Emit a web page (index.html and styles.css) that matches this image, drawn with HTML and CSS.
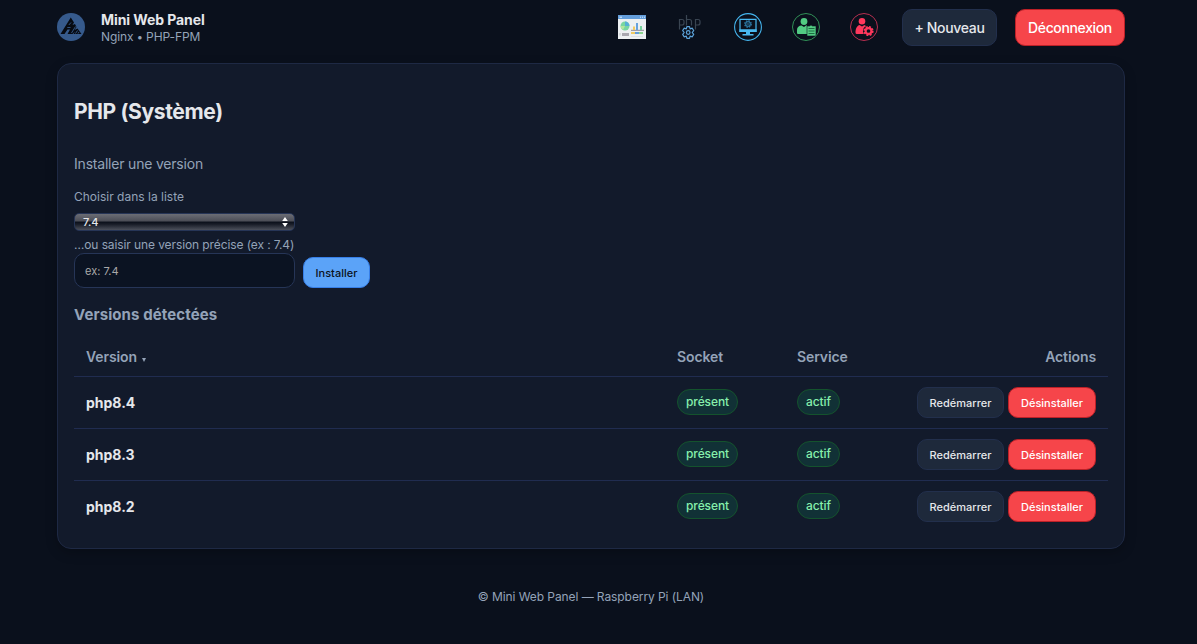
FILE: index.html
```html
<!DOCTYPE html>
<html lang="fr">
<head>
<meta charset="utf-8">
<title>Mini Web Panel</title>
<link rel="stylesheet" href="styles.css">
</head>
<body>
<div class="container">
  <header class="topbar">
    <div class="brand">
      <svg class="logo" viewBox="0 0 28 28"><circle cx="14" cy="14" r="14" fill="#365a8c"/><path d="M3.500 21 13.800 4.500 17 9.500 15.500 12 18 11 19.500 14 17.500 17 20.500 15.500 24.500 21H16.500L18 18.500 15.500 21H10.500L13 16.500H10.500L7.500 21Z" fill="#060a12"/><path d="M10.300 14.500H13.500M11.800 12 14 9.500M14.500 20 18.500 13.500M18.500 20.500 20.500 17.500M21 20.500 22 19" stroke="#365a8c" stroke-width=".9"/></svg>
      <div class="brand-text">
        <div class="brand-name">Mini Web Panel</div>
        <div class="brand-sub">Nginx <span class="dot">•</span> PHP-FPM</div>
      </div>
    </div>
    <nav class="nav">
      <a class="icon"><svg viewBox="0 0 28 28"><path d="M0 2h28v24H0z" fill="#edf0f2"/><path d="M0 2h28v4H0z" fill="#649edb"/><path d="M1.500 4.200h2.500M22 4.200h1m1 0h1m1 0h1" stroke="#d9ecff"/><circle cx="7" cy="13" r="4.500" fill="#79d6a0"/><path d="M7 13V8.500A4.500 4.500 0 0 1 11.500 13Z" fill="#56afd6"/><path d="M7 13H2.500A4.500 4.500 0 0 0 5 17Z" fill="#b4e59c"/><path d="M13 17.300h13" stroke="#8b8794"/><path d="M15 13.500h2V17h-2z" fill="#f0ca62"/><path d="M18 10h2v7h-2z" fill="#66a2dc"/><path d="M22 13h2v4h-2z" fill="#78d39e"/><path d="M4 20h7v3H4z" fill="#aaa8b0"/><path d="M1.500 20h1v2.500h-1z" fill="#c4c5cb"/><path d="M13 19h4v2h-4z" fill="#f0ca62"/><path d="M17 19h4v2h-4z" fill="#649edb"/><path d="M21 19h4v2h-4z" fill="#8bd58f"/><path d="M13 23.500h12" stroke="#dde1e5"/></svg></a>
      <a class="icon"><svg viewBox="0 0 28 28" fill="none"><path d="M3.500 16.500V6.500h2.500a2 2 0 0 1 2 2v1.500a2 2 0 0 1-2 2H3.500M10.500 2V12.500M10.500 6.500h3a2 2 0 0 1 2 2v4M19.500 16.500V6.500h2.500a2 2 0 0 1 2 2v1.500a2 2 0 0 1-2 2h-2.500" stroke="#3a4552" stroke-width="1.200"/><path transform="translate(.2 .5)" d="M10.700 13.200h2.600l.6 2.100 2.200-.6 1.400 2.400-1.500 1.900 1.500 1.900-1.400 2.400-2.200-.6-.6 2.100h-2.600l-.6-2.100-2.200.6-1.400-2.400L8 19l-1.500-1.900 1.400-2.400 2.200.6Z" fill="#0a101c" stroke="#5ba2d9" stroke-width="1.200" stroke-linejoin="round"/><circle cx="12.200" cy="19.500" r="1.800" stroke="#5ba2d9" stroke-width="1.200"/></svg></a>
      <a class="icon"><svg viewBox="0 0 28 28"><circle cx="14" cy="14" r="13.400" fill="none" stroke="#45b5ee" stroke-width="1.100"/><path d="M6 6.300h16v12H6z" fill="none" stroke="#49b9f1" stroke-width="1.200"/><path d="M5.400 16.300h17.200V19H5.400zM12 18.500h4V21h3.500v1.500h-11V21H12z" fill="#49b9f1"/><circle cx="14" cy="11" r="3.200" fill="none" stroke="#2b739d" stroke-width="1.400" stroke-dasharray="1.500 1.010"/><circle cx="14" cy="11" r="2.300" fill="none" stroke="#2b739d" stroke-width="1.300"/><circle cx="14" cy="11" r=".8" fill="#3181b0"/></svg></a>
      <a class="icon"><svg viewBox="0 0 28 28"><circle cx="14" cy="14" r="13.500" fill="none" stroke="#319057"/><circle cx="12" cy="8.500" r="3.400" fill="#52cb83"/><path d="M5 20.500V17c0-3 2.200-4.600 4.500-4.600L12 14l2-1.600h1V21H6Z" fill="#52cb83"/><path d="M15 13h2.500l1.500-1 1.500 1H24v10h-9z" fill="#52cb83" stroke="#0b1320" stroke-width=".6"/><path d="M16.500 15.500h6M16.500 18h6M16.500 20.500h6" stroke="#17623a" stroke-width=".9"/></svg></a>
      <a class="icon"><svg viewBox="0 0 28 28"><circle cx="14" cy="14" r="13.500" fill="none" stroke="#b72f50"/><circle cx="12" cy="8.200" r="3.300" fill="#ff385c"/><path d="M5.500 19.500C5.500 15 7.500 12.500 9.500 12L12 13.500 14.500 12 16 13v8H8c-2 0-2.500-.5-2.500-1.500Z" fill="#ff385c"/><circle cx="18.500" cy="18" r="3.100" fill="none" stroke="#0b1320" stroke-width="5"/><circle cx="18.500" cy="18" r="4.200" fill="none" stroke="#ff385c" stroke-width="1.800" stroke-dasharray="1.900 1.400"/><circle cx="18.500" cy="18" r="2.900" fill="none" stroke="#ff385c" stroke-width="2.100"/></svg></a>
      <a class="btn btn-new">+ Nouveau</a>
      <a class="btn btn-danger btn-logout">Déconnexion</a>
    </nav>
  </header>
  <main class="card">
    <h2>PHP (Système)</h2>
    <div class="section-label">Installer une version</div>
    <form class="install">
      <div class="fields">
        <label class="list-label">Choisir dans la liste</label>
        <div class="select"><span>7.4</span><svg viewBox="0 0 6 10"><path d="M3 0 5.800 4H.2zM3 10 5.800 6H.2z" fill="#fff"/></svg></div>
        <label class="exact-label">…ou saisir une version précise (ex : 7.4)</label>
        <input type="text" placeholder="ex: 7.4">
      </div>
      <button type="button" class="btn btn-small btn-primary">Installer</button>
    </form>
    <h3>Versions détectées</h3>
    <div class="table">
      <div class="row head"><div>Version <svg class="sort" viewBox="0 0 4 4"><path d="M0 0h4L2 4z" fill="#94a3b8"/></svg></div><div>Socket</div><div>Service</div><div class="actions">Actions</div></div>
      <div class="row"><div class="version">php8.4</div><div><span class="badge">présent</span></div><div><span class="badge">actif</span></div><div class="actions"><button class="btn btn-small">Redémarrer</button><button class="btn btn-small btn-danger">Désinstaller</button></div></div>
      <div class="row"><div class="version">php8.3</div><div><span class="badge">présent</span></div><div><span class="badge">actif</span></div><div class="actions"><button class="btn btn-small">Redémarrer</button><button class="btn btn-small btn-danger">Désinstaller</button></div></div>
      <div class="row"><div class="version">php8.2</div><div><span class="badge">présent</span></div><div><span class="badge">actif</span></div><div class="actions"><button class="btn btn-small">Redémarrer</button><button class="btn btn-small btn-danger">Désinstaller</button></div></div>
    </div>
  </main>
  <footer>© Mini Web Panel — Raspberry Pi (LAN)</footer>
</div>
</body>
</html>
```
FILE: styles.css
```css
* { box-sizing: border-box; }
body {
  margin: 0;
  height: 644px;
  overflow: hidden;
  background: #0a101c;
  color: #e5e7eb;
  font: 14px/20px Inter, "Liberation Sans", sans-serif;
}
.container { width: 1068px; margin-left: 57px; }
.topbar { height: 63px; padding: 9px 0 18px; display: flex; justify-content: space-between; align-items: center; }
.brand { display: flex; align-items: center; gap: 16px; }
.logo { width: 28px; height: 28px; }
.brand-text { padding-top: 2px; }
.brand-name { font-weight: 700; line-height: 17px; letter-spacing: -.08px; }
.brand-sub { font-size: 12px; line-height: 17px; letter-spacing: -.1px; color: #94a3b8; }
.dot { font-size: 11px; }
.nav { display: flex; align-items: center; }
.icon { width: 28px; height: 28px; margin-right: 30px; }
.icon svg { display: block; width: 28px; height: 28px; }
.icon:nth-child(5) { margin-right: 24px; }
.btn {
  display: inline-flex;
  align-items: center;
  justify-content: center;
  border: 1px solid #222f4c;
  border-radius: 10px;
  background: #1e293b;
  color: #e5e7eb;
  font-family: inherit;
  font-weight: 500;
  white-space: nowrap;
}
.btn-new { width: 95px; height: 37px; margin-right: 18px; padding-top: 1px; letter-spacing: -.32px; }
.btn-danger { background: #f6454a; border-color: #bd2027; color: #fff; }
.btn-logout { width: 110px; height: 37px; padding-top: 1px; letter-spacing: -.36px; }
.card {
  height: 486px;
  padding: 0 16px;
  border: 1px solid #1e2944;
  border-radius: 14px;
  background: #121a2b;
  box-shadow: 0 4px 12px rgba(0, 0, 0, .22);
}
h2 { margin: 0; padding-top: 34px; font-size: 21px; line-height: 28px; font-weight: 700; letter-spacing: -.34px; }
.section-label { margin-top: 28px; letter-spacing: -.2px; color: #94a3b8; }
.install { display: flex; align-items: flex-end; gap: 8px; margin-top: 13px; }
.fields { width: 221px; display: flex; flex-direction: column; }
label { color: #94a3b8; font-size: 12px; line-height: 20px; white-space: nowrap; }
.select {
  display: flex;
  align-items: center;
  justify-content: space-between;
  height: 18px;
  margin: 6px 0 5px;
  padding: 0 6px 0 8px;
  border: 1px solid #263557;
  border-radius: 5px;
  background: linear-gradient(#6b6d75, #4a4c55 46%, #080d18 48%, #1a1e29 65%, #4c505b);
  font-size: 11px;
  font-weight: 500;
  line-height: 16px;
}
.select svg { width: 6px; height: 10px; }
.exact-label { line-height: 17px; letter-spacing: -.1px; }
input {
  width: 221px;
  height: 35px;
  padding: 0 10px;
  border: 1px solid #263557;
  border-radius: 10px;
  background: #0b1322;
  font: 11px Inter, sans-serif;
}
input::placeholder { color: #a9a9a9; opacity: 1; }
.btn-small { height: 31px; padding: 0 12px; font-size: 11px; }
.btn-primary { width: 67px; background: #5ba3f8; border-color: #377fe8; color: #0b1220; }
h3 { margin: 16px 0 0; font-size: 15px; line-height: 22px; font-weight: 700; letter-spacing: .1px; color: #94a3b8; }
.table { width: 1034px; margin-top: 11px; }
.row {
  display: grid;
  grid-template-columns: 591px 120px 120px 1fr;
  align-items: center;
  height: 52px;
  padding: 0 12px;
  border-bottom: 1px solid #202c50;
}
.row:last-child { border-bottom-color: transparent; }
.head { height: 40px; color: #94a3b8; font-weight: 600; letter-spacing: -.1px; }
.sort { width: 4px; height: 4px; margin-left: 2px; }
.version { font-weight: 700; }
.badge {
  display: flex;
  width: max-content;
  align-items: center;
  height: 26px;
  padding: 0 8px;
  border: 1px solid #14532d;
  border-radius: 13px;
  background: #113136;
  color: #86efac;
  font-size: 12px;
  font-weight: 500;
  letter-spacing: -.1px;
  margin-bottom: 1px;
}
.actions { display: flex; justify-content: flex-end; gap: 4px; }
.actions .btn { width: 87px; }
.actions .btn-danger { width: 88px; }
.row:not(.head) .actions { padding-right: 1px; }
footer { margin-top: 38px; text-align: center; color: #94a3b8; font-size: 12px; line-height: 20px; letter-spacing: -.08px; }
```
